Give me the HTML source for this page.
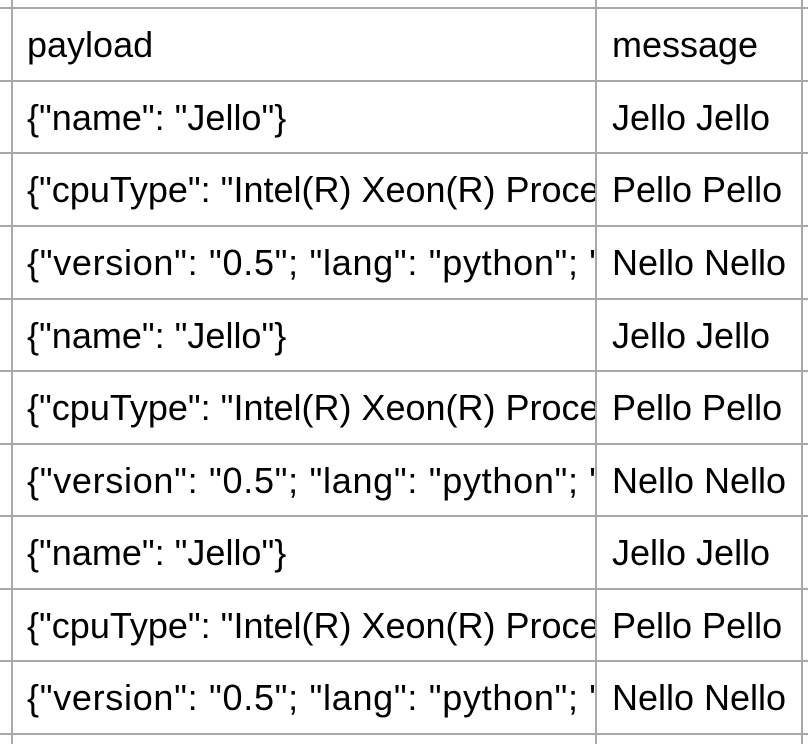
<!DOCTYPE html>
<html><head><meta charset="utf-8"><style>
html,body{margin:0;padding:0;background:#fff;width:808px;height:744px;overflow:hidden}
body{position:relative;font-family:"Liberation Sans",Arial,sans-serif;font-size:36px;color:#000}
.h{position:absolute;left:0;width:808px;height:2px;background:#a8a8a8}
.v{position:absolute;top:0;height:744px;width:2px;background:#a8a8a8}
.c{position:absolute;white-space:nowrap;overflow:hidden;line-height:72px;height:72px}
.a{left:27px;width:568px}
.b{left:612px;width:188px}
.w{letter-spacing:0.7px}
</style></head><body>
<div class="v" style="left:11px"></div>
<div class="v" style="left:595px"></div>
<div class="v" style="left:801px"></div>
<div class="h" style="top:7px"></div>
<div class="h" style="top:80px"></div>
<div class="h" style="top:152px"></div>
<div class="h" style="top:225px"></div>
<div class="h" style="top:298px"></div>
<div class="h" style="top:370px"></div>
<div class="h" style="top:443px"></div>
<div class="h" style="top:515px"></div>
<div class="h" style="top:588px"></div>
<div class="h" style="top:660px"></div>
<div class="h" style="top:733px"></div>

<div class="c a" style="top:9px">payload</div><div class="c b" style="top:9px">message</div>
<div class="c a" style="top:82px">{"name": "Jello"}</div><div class="c b" style="top:82px">Jello Jello</div>
<div class="c a" style="top:154px">{"cpuType": "Intel(R) Xeon(R) Processor"}</div><div class="c b" style="top:154px">Pello Pello</div>
<div class="c a w" style="top:227px">{"version": "0.5"; "lang": "python"; "x"}</div><div class="c b" style="top:227px">Nello Nello</div>
<div class="c a" style="top:300px">{"name": "Jello"}</div><div class="c b" style="top:300px">Jello Jello</div>
<div class="c a" style="top:372px">{"cpuType": "Intel(R) Xeon(R) Processor"}</div><div class="c b" style="top:372px">Pello Pello</div>
<div class="c a w" style="top:445px">{"version": "0.5"; "lang": "python"; "x"}</div><div class="c b" style="top:445px">Nello Nello</div>
<div class="c a" style="top:517px">{"name": "Jello"}</div><div class="c b" style="top:517px">Jello Jello</div>
<div class="c a" style="top:590px">{"cpuType": "Intel(R) Xeon(R) Processor"}</div><div class="c b" style="top:590px">Pello Pello</div>
<div class="c a w" style="top:662px">{"version": "0.5"; "lang": "python"; "x"}</div><div class="c b" style="top:662px">Nello Nello</div>
</body></html>
